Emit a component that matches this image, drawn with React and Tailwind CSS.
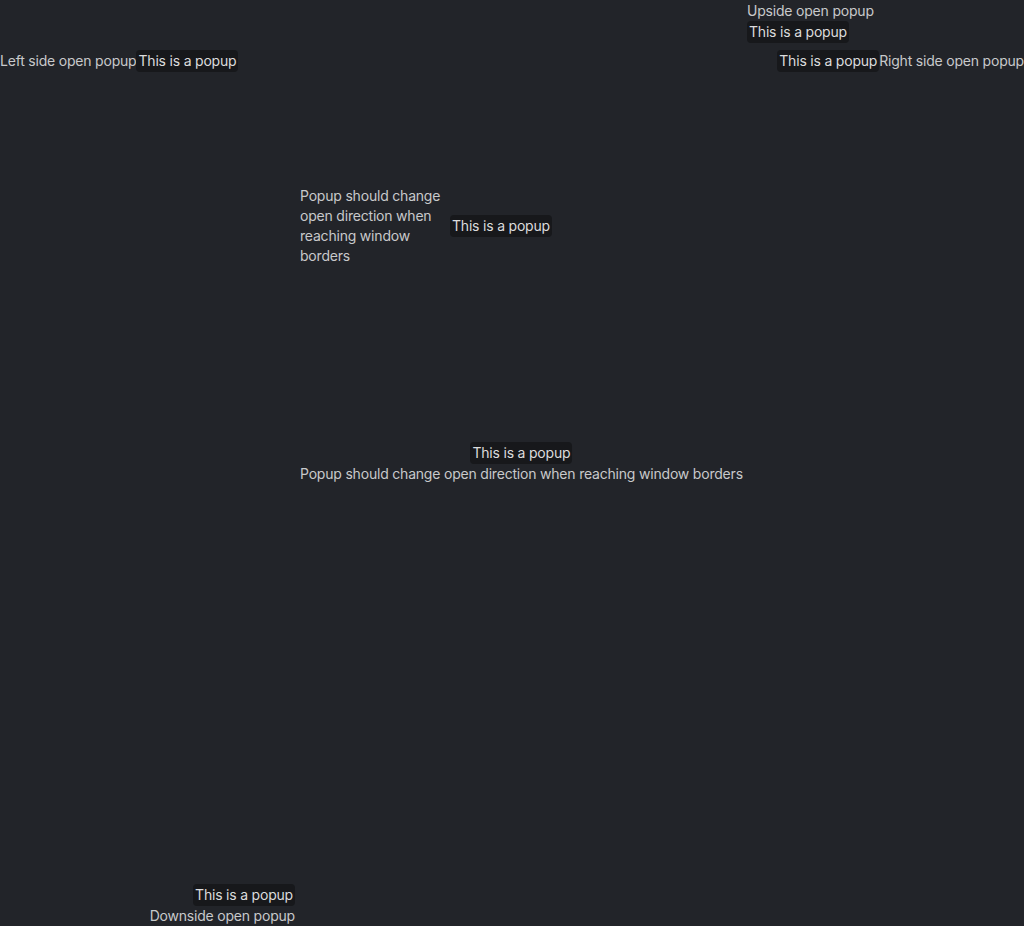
const popupCls =
  'absolute whitespace-nowrap rounded-[4px] bg-[#17181b] px-[2px] py-[1px] text-[#dcdcdd] leading-5';

function Popup({ side }) {
  const pos = {
    left: 'left-full top-1/2 -translate-y-1/2',
    right: 'right-full top-1/2 -translate-y-1/2',
    below: 'left-0 top-full',
    above: 'bottom-full left-1/2 -translate-x-1/2',
    aboveRight: 'bottom-full right-0',
  }[side];
  return <span className={`${popupCls} ${pos}`}>This is a popup</span>;
}

export default function App() {
  return (
    <div
      className="flex h-[926px] w-[1024px] flex-col bg-[#222429] text-[14px] leading-5 tracking-[-0.2px] text-[#c8c9cb]"
      style={{ fontFamily: 'Inter, "Noto Sans", sans-serif' }}
    >
      {/* top row */}
      <div className="flex items-start justify-between">
        <div className="relative mt-[51px]">
          Left side open popup
          <Popup side="left" />
        </div>
        <div className="flex w-[277px] flex-col">
          <div className="relative mt-[1px] self-start">
            Upside open popup
            <Popup side="below" />
          </div>
          <div className="relative mt-[30px] self-end">
            Right side open popup
            <Popup side="right" />
          </div>
        </div>
      </div>

      {/* wrapped anchor */}
      <div className="relative ml-[300px] mt-[115px] w-[150px]">
        Popup should change open direction when reaching window borders
        <Popup side="left" />
      </div>

      {/* wide anchor */}
      <div className="ml-[300px] mt-[198px] flex">
        <div className="relative">
          Popup should change open direction when reaching window borders
          <Popup side="above" />
        </div>
      </div>

      {/* bottom anchor */}
      <div className="mt-auto flex w-[295px] justify-end">
        <div className="relative">
          Downside open popup
          <Popup side="aboveRight" />
        </div>
      </div>
    </div>
  );
}
